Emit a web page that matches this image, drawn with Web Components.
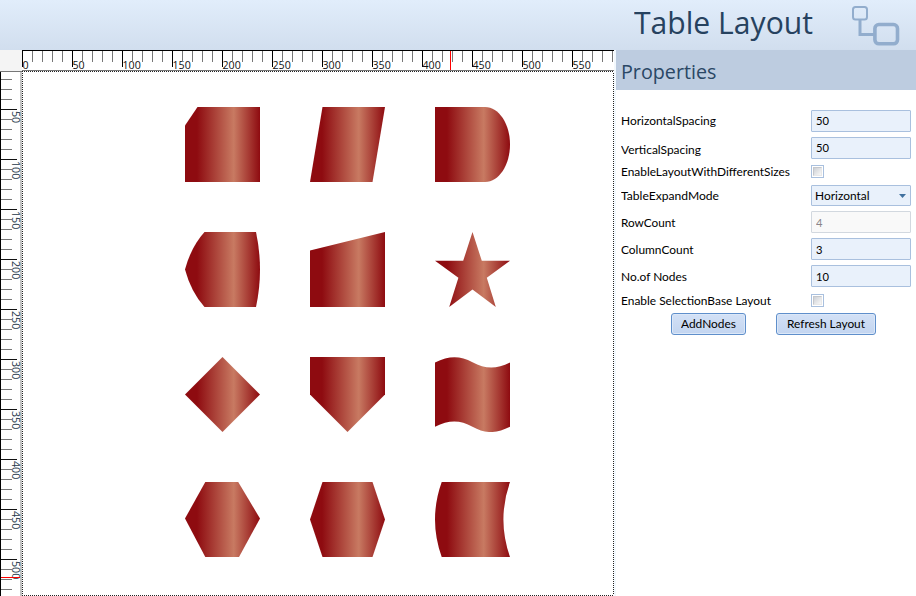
<!DOCTYPE html>
<html lang="en"><head><meta charset="utf-8"><title>Table Layout</title>
<style>
body{margin:0;width:916px;height:596px;overflow:hidden;background:#fff;font-family:Lato,"Liberation Sans",sans-serif;color:#000}
</style></head><body>
<table-layout-app></table-layout-app>
<script>
const root=(el,html)=>{const r=el.attachShadow({mode:'open'});r.innerHTML=html;return r};

/* Text set to a given width: w = drawn width in px */
customElements.define('fit-text',class extends HTMLElement{
  connectedCallback(){
    const r=root(this,`<style>:host{display:block;white-space:pre;line-height:16px;height:16px}span{display:inline-block;transform-origin:0 50%}</style><span><slot></slot></span>`);
    const s=r.querySelector('span'),w=+this.getAttribute('w');
    this.style.width=w+'px';
    const n=s.getBoundingClientRect().width;
    if(n)s.style.transform=`scaleX(${w/n})`;
  }
});

customElements.define('app-header',class extends HTMLElement{
  connectedCallback(){root(this,`<style>
:host{display:flex;box-sizing:border-box;height:50px;padding-left:634px;background:linear-gradient(#e1edfb,#d1deee);color:#26425f;font-family:"Open Sans","Noto Sans",sans-serif}
fit-text{font-size:30.5px;line-height:44px;height:44px}
svg{margin-left:39px}
</style><fit-text w="179"><slot></slot></fit-text>
<svg width="52" height="50" fill="none" stroke="#92adcd"><path d="M8 20V34.5H22" stroke-width="3"/><rect x="1" y="7" width="14" height="12.6" rx="2.5" stroke-width="2"/><rect x="22.9" y="24.5" width="22.6" height="19.3" rx="4" stroke-width="3.6"/></svg>`)}
});

customElements.define('ruler-bar',class extends HTMLElement{
  connectedCallback(){
    const v=this.hasAttribute('vertical');let g='';
    const t=(n,s)=>`<text ${s} textLength="${String(n).length*6.1}" lengthAdjust="spacingAndGlyphs">${n}</text>`;
    if(v){
      for(let i=1;i<=53;i++){const y=i*10-12,m=i%5===0;if(y<0)continue;
        g+=`<rect x="1" y="${y}" width="${m?16:11}" height="1" fill="${m?'#111':'#777'}"/>`;
        if(m)g+=t(i*10,`transform="translate(11.7 ${y+2}) rotate(90)" fill="#26384a"`)}
      g=`<rect x="20" width="2" height="525" fill="#c3c3c3"/><rect width="1" height="525" fill="#000"/><rect width="22" height="1" fill="#777"/>`+g+`<rect y="506" x="1" width="19" height="1" fill="#f00"/>`;
    }else{
      for(let i=0;i<60;i++){const x=i*10,m=i%5===0;
        g+=`<rect x="${x}" y="1" width="1" height="${m?16:11}" fill="${m?'#000':'#777'}"/>`;
        if(m)g+=t(i*10,`x="${x+.5}" y="19" fill="#111"`)}
      g=`<rect width="592" height="1" fill="#000"/><rect y="20" width="592" height="1" fill="#777"/>`+g+`<rect x="428" y="1" width="1" height="19" fill="#f00"/>`;
    }
    root(this,`<style>:host{display:block;background:#fff}svg{display:block;overflow:visible}text{font:11.5px "Open Sans","Noto Sans",sans-serif}</style><svg width="${v?22:592}" height="${v?525:21}" shape-rendering="crispEdges">${g}</svg>`)}
});

const SHAPES={
 snip:'M12.5 0H75V75H0V18.5Z',
 parallelogram:'M12.5 0H75L62.5 75H0Z',
 delay:'M0 0H50C64 0 75 17 75 37.5S64 75 50 75H0Z',
 display:'M19.5 0H71Q79 37.5 71 75H19.5Q6 60 0 37.5Q6 15 19.5 0Z',
 manual:'M0 18.5L75 0V75H0Z',
 star:'M37.5 0L46.8 28.8H75L51.8 45.8L60.8 75L37.5 57.6L14.2 75L23.4 45.8L0 28.8H28.2Z',
 diamond:'M37.5 0L75 37.5L37.5 75L0 37.5Z',
 offpage:'M0 0H75V37.5L37.5 75L0 37.5Z',
 wave:'M0 5.5C14 -1.5 25 -1.5 37.5 5.2S61 12.5 75 5.5V69.8C61 76.8 50 76.8 37.5 69.8S14 62.7 0 69.8Z',
 hexagon:'M20.3 0H53.2L75 36.5L54 75H20.3L0 36.5Z',
 preparation:'M12.5 0H62.5L75 37.5L62.5 75H12.5L0 37.5Z',
 storage:'M6.7 0H75Q61.8 37.5 75 75H6.7Q-6.7 37.5 6.7 0Z'};
customElements.define('diagram-node',class extends HTMLElement{
  connectedCallback(){root(this,`<style>:host{display:block;width:75px;height:75px}svg{display:block}</style>
<svg width="75" height="75"><defs><linearGradient id="g" gradientUnits="userSpaceOnUse" x1="0" x2="75" y1="0" y2="0"><stop offset=".16" stop-color="#8e0b10"/><stop offset=".65" stop-color="#c87a62"/><stop offset="1" stop-color="#8e0b10"/></linearGradient></defs><path fill="url(#g)" d="${SHAPES[this.getAttribute('shape')]}"/></svg>`)}
});

customElements.define('diagram-page',class extends HTMLElement{
  connectedCallback(){root(this,`<style>
:host{display:grid;box-sizing:border-box;grid-template-columns:repeat(3,75px);grid-auto-rows:75px;gap:50px;padding:36px 0 0 163px;
background:repeating-linear-gradient(90deg,#222 0 1px,#fff 1px 2px) 0 0/100% 1px no-repeat,
repeating-linear-gradient(90deg,#222 0 1px,#fff 1px 2px) 0 100%/100% 1px no-repeat,
repeating-linear-gradient(#222 0 1px,#fff 1px 2px) 0 0/1px 100% no-repeat,
repeating-linear-gradient(#222 0 1px,#fff 1px 2px) 100% 0/1px 100% no-repeat}
</style><slot></slot>`)}
});

customElements.define('prop-row',class extends HTMLElement{
  connectedCallback(){root(this,`<style>
:host{display:grid;grid-template-columns:190px 100px;align-items:center;font-size:12px}
fit-text{margin-top:var(--shift,0)}
</style><fit-text w="${this.getAttribute('w')}">${this.getAttribute('label')}</fit-text><slot></slot>`)}
});
customElements.define('text-field',class extends HTMLElement{
  connectedCallback(){root(this,`<style>
:host{display:flex;box-sizing:border-box;align-items:center;height:22px;border:1px solid #a9c0de;border-radius:1px;background:#e9f1fb;padding-left:4px;font-size:12px}
fit-text{margin-top:var(--shift,0)}
:host([disabled]){background:#f9f9f9;border-color:#d2d8df;color:#8b8489}
:host([drop]){height:21px;padding:0 4px 0 3px;justify-content:space-between}
svg{display:none}:host([drop]) svg{display:block}
</style><fit-text w="${this.getAttribute('w')}"><slot></slot></fit-text><svg width="7" height="4"><path d="M0 0H7L3.5 4Z" fill="#41719f"/></svg>`)}
});
customElements.define('check-box',class extends HTMLElement{
  connectedCallback(){root(this,`<style>
:host{display:block;box-sizing:border-box;width:13px;height:13px;border:1px solid #a9c0de;background:#fff;padding:1px}
i{display:block;box-sizing:border-box;width:9px;height:9px;border:1px solid #c4c7cc;border-right-color:#e8e8e8;border-bottom-color:#e8e8e8;background:linear-gradient(135deg,#cdd0d5,#f8f8f8)}
</style><i></i>`)}
});
customElements.define('push-button',class extends HTMLElement{
  connectedCallback(){root(this,`<style>
:host{display:flex;box-sizing:border-box;height:22px;align-items:center;justify-content:center;border:1px solid #5f8fcb;border-radius:3px;box-shadow:inset 0 0 0 1px #dce8f8;background:linear-gradient(#d3e1f6,#c3d5f0);font-size:12px}
</style><fit-text w="${this.getAttribute('w')}"><slot></slot></fit-text>`)}
});

customElements.define('property-panel',class extends HTMLElement{
  connectedCallback(){root(this,`<style>
:host{display:block;border-left:2px solid #f2f8fd}
h2{margin:0;height:40px;box-sizing:border-box;padding:9px 0 0 5px;background:#bdcce0;color:#2a4765;font:400 20.5px "Open Sans","Noto Sans",sans-serif}
h2 fit-text{line-height:24px;height:24px}
.rows{padding:20px 0 0 5px}
.buttons{display:flex;gap:30px;padding:6px 0 0 50px}
</style><h2><fit-text w="95.5">Properties</fit-text></h2><div class="rows"><slot></slot><div class="buttons"><slot name="buttons"></slot></div></div>`)}
});

customElements.define('table-layout-app',class extends HTMLElement{
  connectedCallback(){root(this,`<style>
:host{display:grid;width:916px;height:596px;grid-template-rows:50px 546px}
main{display:grid;grid-template-columns:22px 592px 302px;grid-template-rows:21px 525px}
.corner{background:#f4f4f4}
property-panel{grid-column:3;grid-row:1/3}
prop-row{margin-bottom:5px}
.check{height:13px;grid-template-rows:13px}
.low{--shift:2px}
</style>
<app-header>Table Layout</app-header>
<main><div class="corner"></div><ruler-bar></ruler-bar><ruler-bar vertical></ruler-bar>
<diagram-page>${Object.keys(SHAPES).map(s=>`<diagram-node shape="${s}"></diagram-node>`).join('')}</diagram-page>
<property-panel>
<prop-row label="HorizontalSpacing" w="95"><text-field w="13">50</text-field></prop-row>
<prop-row label="VerticalSpacing" w="80" style="margin-bottom:6px;--shift:4px"><text-field w="13" style="--shift:0px">50</text-field></prop-row>
<prop-row class="check" label="EnableLayoutWithDifferentSizes" w="169" style="margin-bottom:7px"><check-box></check-box></prop-row>
<prop-row label="TableExpandMode" w="98"><text-field drop w="54.5">Horizontal</text-field></prop-row>
<prop-row class="low" label="RowCount" w="54.5"><text-field disabled w="6.5">4</text-field></prop-row>
<prop-row class="low" label="ColumnCount" w="72.5"><text-field w="6.5">3</text-field></prop-row>
<prop-row class="low" label="No.of Nodes" w="66" style="margin-bottom:7px"><text-field w="13">10</text-field></prop-row>
<prop-row class="check" style="margin-bottom:0" label="Enable SelectionBase Layout" w="150"><check-box></check-box></prop-row>
<push-button slot="buttons" style="width:75px" w="55">AddNodes</push-button>
<push-button slot="buttons" style="width:100px" w="78">Refresh Layout</push-button>
</property-panel></main>`)}
});
</script></body></html>
